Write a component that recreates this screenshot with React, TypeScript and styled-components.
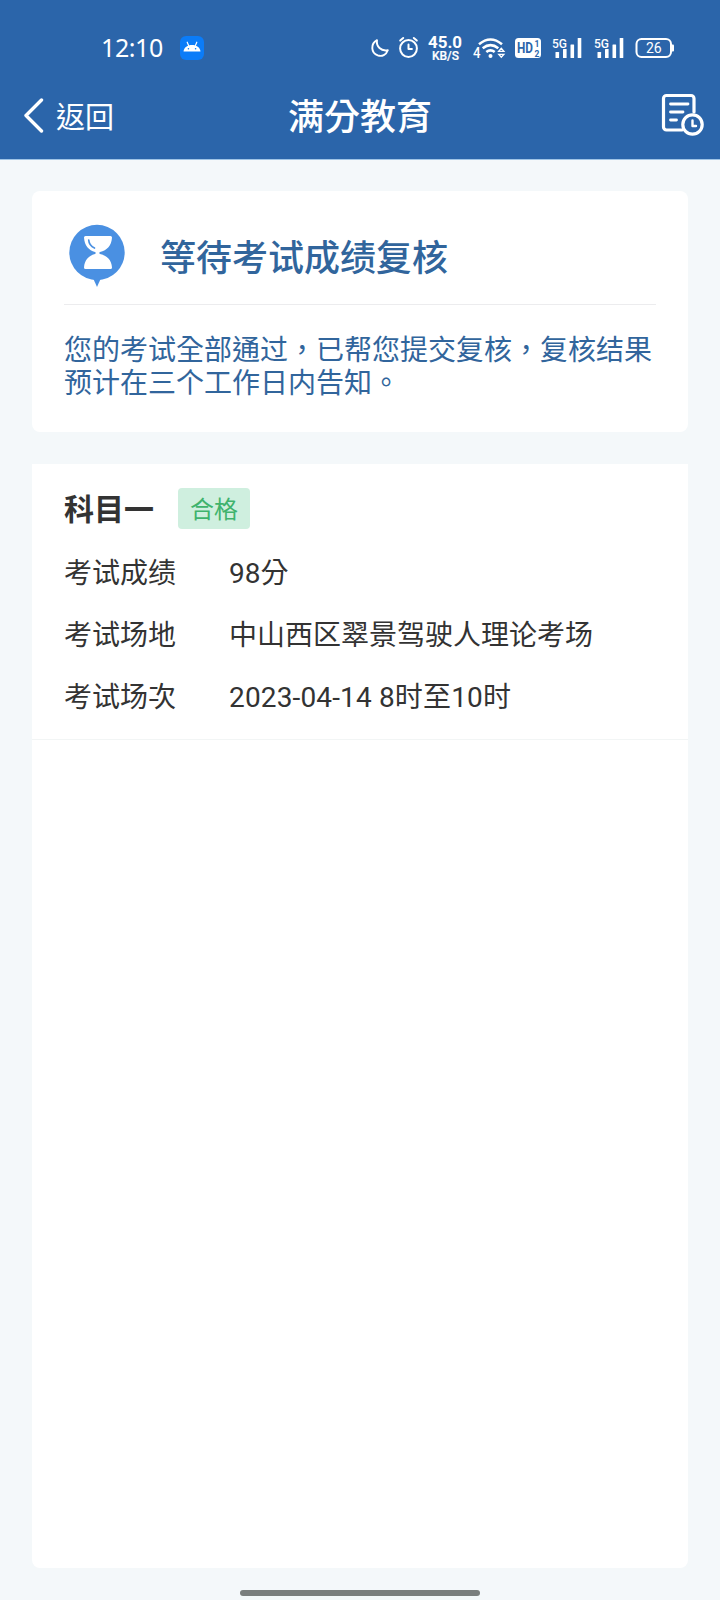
import React from "react";
import styled, { createGlobalStyle } from "styled-components";

const GlobalStyle = createGlobalStyle`
  * { box-sizing: border-box; }
  body {
    margin: 0;
    background: #f4f8fa;
    font-family: Roboto, "Noto Sans CJK TC", sans-serif;
  }
  svg { display: block; flex: none; }
`;

const Screen = styled.div`
  display: flex;
  flex-direction: column;
  width: 720px;
  height: 1600px;
  background: #f4f8fa;
`;

const Header = styled.header`
  height: 160px;
  background: #2b65aa;
  border-bottom: 1px solid #9fc4e6;
  color: #fff;
`;

const StatusBar = styled.div`
  display: flex;
  align-items: center;
  height: 92px;
  padding: 3px 45px 0 101px;
`;

const Clock = styled.span`
  width: 79px;
  padding-bottom: 1px;
  font: 400 25px/30px "Noto Sans", sans-serif;
  letter-spacing: -0.4px;
`;

const StatusIcons = styled.div`
  display: flex;
  margin-left: auto;
  padding-bottom: 1px;
`;

const StatusIcon = styled.svg<{ $gap: number }>`
  height: 28px;
  margin-left: ${(p) => p.$gap}px;
  fill: #fff;
  font-family: Roboto, sans-serif;
`;

const SpeedIcon = styled(StatusIcon)`
  overflow: visible;
`;

const TitleBar = styled.div`
  display: grid;
  grid-template-columns: 1fr auto 1fr;
  align-items: start;
  height: 44px;
  padding: 0 14px;
`;

const BackButton = styled.button`
  display: flex;
  align-items: center;
  gap: 12px;
  padding: 4px 0 0 9px;
  border: 0;
  background: none;
  color: inherit;
  font: 400 29px/40px Roboto, "Noto Sans CJK TC", sans-serif;
`;

const BackLabel = styled.span`
  padding-top: 2px;
`;

const Title = styled.h1`
  margin: 0;
  padding-top: 6px;
  font-size: 36px;
  line-height: 40px;
  font-weight: 500;
`;

const HistoryButton = styled.button`
  justify-self: end;
  height: 44px;
  padding: 0;
  border: 0;
  background: none;
`;

const Content = styled.main`
  display: flex;
  flex: 1;
  flex-direction: column;
  gap: 32px;
  padding: 31px 32px 0;
`;

const NoticeCard = styled.section`
  height: 241px;
  padding: 0 32px;
  border-radius: 8px;
  background: #fff;
  color: #31659c;
`;

const NoticeHead = styled.div`
  display: flex;
  align-items: center;
  gap: 32px;
  height: 114px;
  padding-top: 16px;
  border-bottom: 1px solid #ececee;
`;

const NoticeTitle = styled.h2`
  margin: 0;
  padding-top: 7px;
  font-size: 36px;
  line-height: 40px;
  font-weight: 500;
`;

const NoticeText = styled.p`
  margin: 29px -4px 0 0;
  font-size: 28px;
  line-height: 33px;
`;

const ResultCard = styled.section`
  height: 1104px;
  border-radius: 0 0 8px 8px;
  background: #fff;
  color: #333;
`;

const Subject = styled.div`
  height: 276px;
  padding: 24px 32px 0;
  border-bottom: 1px solid #f2f5f5;
`;

const SubjectHead = styled.div`
  display: flex;
  align-items: center;
  gap: 24px;
  height: 41px;
  margin-bottom: 11px;
`;

const SubjectName = styled.h3`
  margin: 0;
  padding-top: 2px;
  font-size: 30px;
  line-height: 40px;
  font-weight: 700;
`;

const PassBadge = styled.span`
  width: 72px;
  height: 41px;
  padding-top: 2px;
  border-radius: 4px;
  background: #cfefdf;
  color: #3fb36d;
  font-size: 24px;
  line-height: 41px;
  text-align: center;
`;

const Row = styled.div`
  display: flex;
  align-items: center;
  height: 62px;
  font-size: 28px;
`;

const Label = styled.span`
  width: 165px;
`;

const Value = styled.span<{ $spacing?: number }>`
  letter-spacing: ${(p) => p.$spacing ?? 0}px;
`;

const HomeArea = styled.footer`
  display: flex;
  justify-content: center;
  height: 10px;
`;

const HomeHandle = styled.div`
  width: 240px;
  height: 6px;
  border-radius: 3px;
  background: #7a7e7d;
`;

function Signal({ gap }: { gap: number }) {
  return (
    <StatusIcon $gap={gap} width="30" viewBox="0 0 30 28">
      <text x="0" y="14.6" fontSize="12.5" fontWeight="500" textLength="15" lengthAdjust="spacingAndGlyphs">5G</text>
      <rect x="3.5" y="19" width="3.6" height="6" rx=".5" />
      <rect x="11" y="16" width="3.6" height="9" rx=".5" />
      <rect x="18.5" y="11.5" width="3.6" height="13.5" rx=".5" />
      <rect x="25.7" y="5" width="3.6" height="20" rx=".5" />
    </StatusIcon>
  );
}

const rows = [
  { label: "考试成绩", value: "98分" },
  { label: "考试场地", value: "中山西区翠景驾驶人理论考场" },
  { label: "考试场次", value: "2023-04-14 8时至10时", spacing: 0.15 },
];

export default function App() {
  return (
    <Screen lang="zh-TW">
      <GlobalStyle />
      <Header>
        <StatusBar>
          <Clock>12:10</Clock>
          <svg width="24" height="24" viewBox="0 0 24 24">
            <rect width="24" height="24" rx="6" fill="#0b7cf8" />
            <path d="M3.500 15.500C4 11.300 7.500 9 12 9s8 2.300 8.500 6.500z" fill="#fff" />
            <path d="M7.200 6.200 8.800 10M16.800 6.200 15.200 10" stroke="#fff" strokeWidth="1.200" strokeLinecap="round" />
            <circle cx="8.400" cy="12.800" r=".8" fill="#0b7cf8" />
            <circle cx="15.600" cy="12.800" r=".8" fill="#0b7cf8" />
          </svg>
          <StatusIcons>
            <StatusIcon $gap={0} width="18" viewBox="0 0 18 28">
              <path d="M6 7.200C5 13.500 10 18.500 16.800 17.200 15.200 21.800 11 23.800 6.800 22.400 -.2 19.800-.6 10.800 6 7.200z" fill="none" stroke="#fff" strokeWidth="1.900" strokeLinejoin="round" />
            </StatusIcon>
            <StatusIcon $gap={9} width="22" viewBox="0 0 22 28">
              <g fill="none" stroke="#fff" strokeWidth="2" strokeLinecap="round" strokeLinejoin="round">
                <circle cx="10.500" cy="15.500" r="8.400" />
                <path d="M10.500 11.500v4.500h3.400M2.200 7.600 5.200 5M18.800 7.600 15.800 5" />
              </g>
            </StatusIcon>
            <SpeedIcon $gap={8} width="34" viewBox="0 0 34 28">
              <text x="0" y="14.500" fontSize="16" fontWeight="700" textLength="34" lengthAdjust="spacingAndGlyphs">45.0</text>
              <text x="4" y="27" fontSize="12" fontWeight="500" textLength="27" stroke="#fff" strokeWidth=".2" lengthAdjust="spacingAndGlyphs">KB/S</text>
            </SpeedIcon>
            <StatusIcon $gap={11} width="33" viewBox="0 0 33 28">
              <text x="0" y="25" fontSize="14.500" fontWeight="500" textLength="7.500" lengthAdjust="spacingAndGlyphs">4</text>
              <g fill="none" stroke="#fff" strokeWidth="2.600">
                <path d="M6 11.300q11.500-9.600 23 0M9.700 15.200q7.800-6.300 15.600 0M13.300 19q4.200-3.400 8.400 0" />
              </g>
              <circle cx="17.500" cy="23" r="2" />
              <path d="M25.700 18.300 28.300 15.300 30.900 18.300zM25.700 21.300 28.300 24.300 30.900 21.300z" fill="none" stroke="#fff" strokeWidth="1.300" />
            </StatusIcon>
            <StatusIcon $gap={9} width="26" viewBox="0 0 26 28">
              <rect y="5" width="26" height="20" rx="3.500" />
              <g fill="#2b65aa" fontWeight="700">
                <text x="2" y="20.300" fontSize="15" textLength="16" lengthAdjust="spacingAndGlyphs">HD</text>
                <text x="19.500" y="14" fontSize="8.500">1</text>
                <text x="19.500" y="23.800" fontSize="8.500">2</text>
              </g>
            </StatusIcon>
            <Signal gap={11} />
            <Signal gap={12} />
            <StatusIcon $gap={11} width="40" viewBox="0 0 40 28">
              <rect x="1.500" y="6" width="34.500" height="18" rx="5" fill="none" stroke="#fff" strokeWidth="2" />
              <path d="M37 11.500h1a1 1 0 0 1 1 1v5a1 1 0 0 1-1 1h-1z" />
              <text x="11" y="20" fontSize="14" textLength="15.500">26</text>
            </StatusIcon>
          </StatusIcons>
        </StatusBar>
        <TitleBar>
          <BackButton>
            <svg width="21" height="38" viewBox="0 0 21 38">
              <path d="M18.500 2 3 17.500 18.500 33" fill="none" stroke="#fff" strokeWidth="3.400" strokeLinecap="round" strokeLinejoin="round" />
            </svg>
            <BackLabel>返回</BackLabel>
          </BackButton>
          <Title>满分教育</Title>
          <HistoryButton aria-label="history">
            <svg width="46" height="44" viewBox="0 0 46 44" fill="none" stroke="#fff" strokeWidth="3.200" strokeLinecap="round" strokeLinejoin="round">
              <path d="M22 38H6.500a3 3 0 0 1-3-3V6.500a3 3 0 0 1 3-3H31a3 3 0 0 1 3 3V20" />
              <path d="M10.500 12h17.500M10.500 20h12.500M10.500 28h6" strokeWidth="2.800" />
              <circle cx="32.500" cy="32.500" r="9.700" />
              <path d="M32.500 28.500V34H36" strokeWidth="2.400" />
            </svg>
          </HistoryButton>
        </TitleBar>
      </Header>
      <Content>
        <NoticeCard>
          <NoticeHead>
            <svg width="64" height="64" viewBox="0 0 64 64">
              <path d="M29 54 33 63 37 54z" fill="#4a90e2" />
              <circle cx="33" cy="28.500" r="27.700" fill="#4a90e2" />
              <path d="M21.500 12h25a1.500 1.500 0 0 1 1.500 1.500C47.600 21.500 43 26.500 36 28c-1 .3-1 1.700 0 2C43 31.500 47.600 36 48 43.500a1.500 1.500 0 0 1-1.500 1.500h-25a1.500 1.500 0 0 1-1.500-1.500C20.400 36 25 31.500 31 30c1-.3 1-1.700 0-2C25 26.500 20.400 21.500 20 13.500A1.500 1.500 0 0 1 21.500 12z" fill="#fff" />
              <path d="M24.700 16C25 20 27 22.500 30.500 24" fill="none" stroke="#4a90e2" strokeWidth="1.700" strokeLinecap="round" />
            </svg>
            <NoticeTitle>等待考试成绩复核</NoticeTitle>
          </NoticeHead>
          <NoticeText>您的考试全部通过，已帮您提交复核，复核结果预计在三个工作日内告知。</NoticeText>
        </NoticeCard>
        <ResultCard>
          <Subject>
            <SubjectHead>
              <SubjectName>科目一</SubjectName>
              <PassBadge>合格</PassBadge>
            </SubjectHead>
            {rows.map(({ label, value, spacing }) => (
              <Row key={label}>
                <Label>{label}</Label>
                <Value $spacing={spacing}>{value}</Value>
              </Row>
            ))}
          </Subject>
        </ResultCard>
      </Content>
      <HomeArea>
        <HomeHandle />
      </HomeArea>
    </Screen>
  );
}
